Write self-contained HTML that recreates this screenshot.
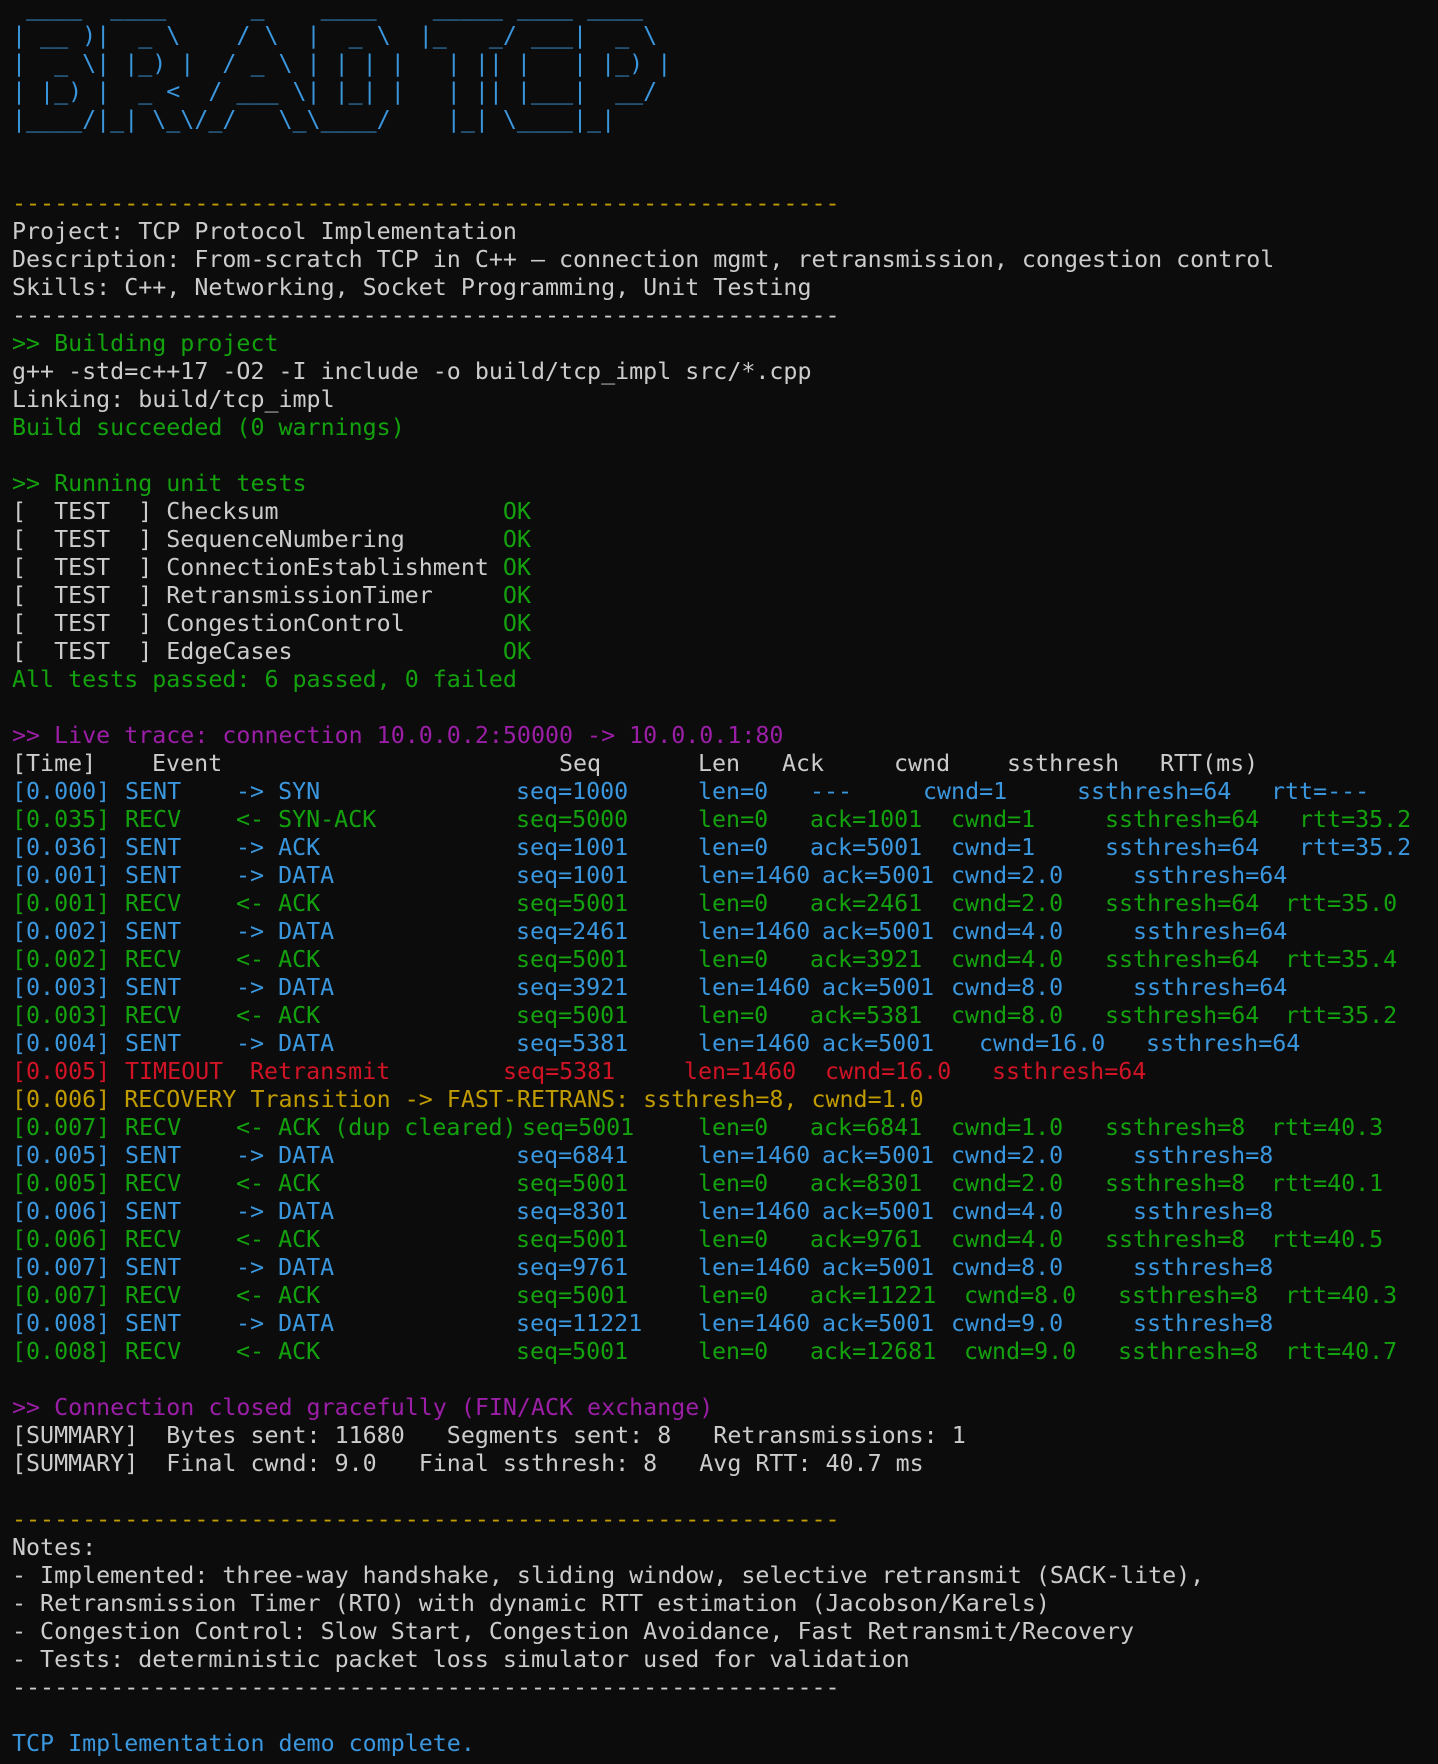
<!DOCTYPE html>
<html><head><meta charset="utf-8"><style>
html,body{margin:0;padding:0;background:#0c0c0c;width:1438px;height:1764px;overflow:hidden}
#t{position:absolute;left:12px;top:-6px;font-family:"DejaVu Sans Mono","Liberation Mono",monospace;font-size:23.3px;color:#cccccc}
.l{height:28px;line-height:28px;white-space:pre;position:relative;width:1420px}
.l span.a{position:absolute;top:0}
.b{color:#3a96dd}.g{color:#13a10e}.y{color:#c19c00}.r{color:#d01426}.p{color:#9b1fa6}
</style></head><body><div id="t">
<div class="l b"> ____  ____      _    ____    _____ ____ ____  </div>
<div class="l b">| __ )|  _ \    / \  |  _ \  |_   _/ ___|  _ \ </div>
<div class="l b">|  _ \| |_) |  / _ \ | | | |   | || |   | |_) |</div>
<div class="l b">| |_) |  _ &lt;  / ___ \| |_| |   | || |___|  __/ </div>
<div class="l b">|____/|_| \_\/_/   \_\____/    |_| \____|_|    </div>
<div class="l"> </div>
<div class="l"> </div>
<div class="l y">-----------------------------------------------------------</div>
<div class="l">Project: TCP Protocol Implementation</div>
<div class="l">Description: From-scratch TCP in C++ — connection mgmt, retransmission, congestion control</div>
<div class="l">Skills: C++, Networking, Socket Programming, Unit Testing</div>
<div class="l">-----------------------------------------------------------</div>
<div class="l g">&gt;&gt; Building project</div>
<div class="l">g++ -std=c++17 -O2 -I include -o build/tcp_impl src/*.cpp</div>
<div class="l">Linking: build/tcp_impl</div>
<div class="l g">Build succeeded (0 warnings)</div>
<div class="l"> </div>
<div class="l g">&gt;&gt; Running unit tests</div>
<div class="l">[  TEST  ] Checksum                <span class="g">OK</span></div>
<div class="l">[  TEST  ] SequenceNumbering       <span class="g">OK</span></div>
<div class="l">[  TEST  ] ConnectionEstablishment <span class="g">OK</span></div>
<div class="l">[  TEST  ] RetransmissionTimer     <span class="g">OK</span></div>
<div class="l">[  TEST  ] CongestionControl       <span class="g">OK</span></div>
<div class="l">[  TEST  ] EdgeCases               <span class="g">OK</span></div>
<div class="l g">All tests passed: 6 passed, 0 failed</div>
<div class="l"> </div>
<div class="l p">&gt;&gt; Live trace: connection 10.0.0.2:50000 -&gt; 10.0.0.1:80</div>
<div class="l"><span class="a" style="left:0">[Time]</span><span class="a" style="left:140px">Event</span><span class="a" style="left:547px">Seq</span><span class="a" style="left:686px">Len</span><span class="a" style="left:770px">Ack</span><span class="a" style="left:882px">cwnd</span><span class="a" style="left:995px">ssthresh</span><span class="a" style="left:1148px">RTT(ms)</span></div>
<div class="l b"><span class="a" style="left:0">[0.000]</span><span class="a" style="left:113px">SENT</span><span class="a" style="left:224px">-&gt; SYN</span><span class="a" style="left:504px">seq=1000</span><span class="a" style="left:686px">len=0</span><span class="a" style="left:798px">---</span><span class="a" style="left:911px">cwnd=1</span><span class="a" style="left:1065px">ssthresh=64</span><span class="a" style="left:1259px">rtt=---</span></div>
<div class="l g"><span class="a" style="left:0">[0.035]</span><span class="a" style="left:113px">RECV</span><span class="a" style="left:224px">&lt;- SYN-ACK</span><span class="a" style="left:504px">seq=5000</span><span class="a" style="left:686px">len=0</span><span class="a" style="left:798px">ack=1001</span><span class="a" style="left:939px">cwnd=1</span><span class="a" style="left:1093px">ssthresh=64</span><span class="a" style="left:1287px">rtt=35.2</span></div>
<div class="l b"><span class="a" style="left:0">[0.036]</span><span class="a" style="left:113px">SENT</span><span class="a" style="left:224px">-&gt; ACK</span><span class="a" style="left:504px">seq=1001</span><span class="a" style="left:686px">len=0</span><span class="a" style="left:798px">ack=5001</span><span class="a" style="left:939px">cwnd=1</span><span class="a" style="left:1093px">ssthresh=64</span><span class="a" style="left:1287px">rtt=35.2</span></div>
<div class="l b"><span class="a" style="left:0">[0.001]</span><span class="a" style="left:113px">SENT</span><span class="a" style="left:224px">-&gt; DATA</span><span class="a" style="left:504px">seq=1001</span><span class="a" style="left:686px">len=1460</span><span class="a" style="left:810px">ack=5001</span><span class="a" style="left:939px">cwnd=2.0</span><span class="a" style="left:1121px">ssthresh=64</span></div>
<div class="l g"><span class="a" style="left:0">[0.001]</span><span class="a" style="left:113px">RECV</span><span class="a" style="left:224px">&lt;- ACK</span><span class="a" style="left:504px">seq=5001</span><span class="a" style="left:686px">len=0</span><span class="a" style="left:798px">ack=2461</span><span class="a" style="left:939px">cwnd=2.0</span><span class="a" style="left:1093px">ssthresh=64</span><span class="a" style="left:1273px">rtt=35.0</span></div>
<div class="l b"><span class="a" style="left:0">[0.002]</span><span class="a" style="left:113px">SENT</span><span class="a" style="left:224px">-&gt; DATA</span><span class="a" style="left:504px">seq=2461</span><span class="a" style="left:686px">len=1460</span><span class="a" style="left:810px">ack=5001</span><span class="a" style="left:939px">cwnd=4.0</span><span class="a" style="left:1121px">ssthresh=64</span></div>
<div class="l g"><span class="a" style="left:0">[0.002]</span><span class="a" style="left:113px">RECV</span><span class="a" style="left:224px">&lt;- ACK</span><span class="a" style="left:504px">seq=5001</span><span class="a" style="left:686px">len=0</span><span class="a" style="left:798px">ack=3921</span><span class="a" style="left:939px">cwnd=4.0</span><span class="a" style="left:1093px">ssthresh=64</span><span class="a" style="left:1273px">rtt=35.4</span></div>
<div class="l b"><span class="a" style="left:0">[0.003]</span><span class="a" style="left:113px">SENT</span><span class="a" style="left:224px">-&gt; DATA</span><span class="a" style="left:504px">seq=3921</span><span class="a" style="left:686px">len=1460</span><span class="a" style="left:810px">ack=5001</span><span class="a" style="left:939px">cwnd=8.0</span><span class="a" style="left:1121px">ssthresh=64</span></div>
<div class="l g"><span class="a" style="left:0">[0.003]</span><span class="a" style="left:113px">RECV</span><span class="a" style="left:224px">&lt;- ACK</span><span class="a" style="left:504px">seq=5001</span><span class="a" style="left:686px">len=0</span><span class="a" style="left:798px">ack=5381</span><span class="a" style="left:939px">cwnd=8.0</span><span class="a" style="left:1093px">ssthresh=64</span><span class="a" style="left:1273px">rtt=35.2</span></div>
<div class="l b"><span class="a" style="left:0">[0.004]</span><span class="a" style="left:113px">SENT</span><span class="a" style="left:224px">-&gt; DATA</span><span class="a" style="left:504px">seq=5381</span><span class="a" style="left:686px">len=1460</span><span class="a" style="left:810px">ack=5001</span><span class="a" style="left:967px">cwnd=16.0</span><span class="a" style="left:1134px">ssthresh=64</span></div>
<div class="l r"><span class="a" style="left:0">[0.005]</span><span class="a" style="left:113px">TIMEOUT</span><span class="a" style="left:238px">Retransmit</span><span class="a" style="left:491px">seq=5381</span><span class="a" style="left:672px">len=1460</span><span class="a" style="left:813px">cwnd=16.0</span><span class="a" style="left:980px">ssthresh=64</span></div>
<div class="l y">[0.006] RECOVERY Transition -&gt; FAST-RETRANS: ssthresh=8, cwnd=1.0</div>
<div class="l g"><span class="a" style="left:0">[0.007]</span><span class="a" style="left:113px">RECV</span><span class="a" style="left:224px">&lt;- ACK (dup cleared)</span><span class="a" style="left:510px">seq=5001</span><span class="a" style="left:686px">len=0</span><span class="a" style="left:798px">ack=6841</span><span class="a" style="left:939px">cwnd=1.0</span><span class="a" style="left:1093px">ssthresh=8</span><span class="a" style="left:1259px">rtt=40.3</span></div>
<div class="l b"><span class="a" style="left:0">[0.005]</span><span class="a" style="left:113px">SENT</span><span class="a" style="left:224px">-&gt; DATA</span><span class="a" style="left:504px">seq=6841</span><span class="a" style="left:686px">len=1460</span><span class="a" style="left:810px">ack=5001</span><span class="a" style="left:939px">cwnd=2.0</span><span class="a" style="left:1121px">ssthresh=8</span></div>
<div class="l g"><span class="a" style="left:0">[0.005]</span><span class="a" style="left:113px">RECV</span><span class="a" style="left:224px">&lt;- ACK</span><span class="a" style="left:504px">seq=5001</span><span class="a" style="left:686px">len=0</span><span class="a" style="left:798px">ack=8301</span><span class="a" style="left:939px">cwnd=2.0</span><span class="a" style="left:1093px">ssthresh=8</span><span class="a" style="left:1259px">rtt=40.1</span></div>
<div class="l b"><span class="a" style="left:0">[0.006]</span><span class="a" style="left:113px">SENT</span><span class="a" style="left:224px">-&gt; DATA</span><span class="a" style="left:504px">seq=8301</span><span class="a" style="left:686px">len=1460</span><span class="a" style="left:810px">ack=5001</span><span class="a" style="left:939px">cwnd=4.0</span><span class="a" style="left:1121px">ssthresh=8</span></div>
<div class="l g"><span class="a" style="left:0">[0.006]</span><span class="a" style="left:113px">RECV</span><span class="a" style="left:224px">&lt;- ACK</span><span class="a" style="left:504px">seq=5001</span><span class="a" style="left:686px">len=0</span><span class="a" style="left:798px">ack=9761</span><span class="a" style="left:939px">cwnd=4.0</span><span class="a" style="left:1093px">ssthresh=8</span><span class="a" style="left:1259px">rtt=40.5</span></div>
<div class="l b"><span class="a" style="left:0">[0.007]</span><span class="a" style="left:113px">SENT</span><span class="a" style="left:224px">-&gt; DATA</span><span class="a" style="left:504px">seq=9761</span><span class="a" style="left:686px">len=1460</span><span class="a" style="left:810px">ack=5001</span><span class="a" style="left:939px">cwnd=8.0</span><span class="a" style="left:1121px">ssthresh=8</span></div>
<div class="l g"><span class="a" style="left:0">[0.007]</span><span class="a" style="left:113px">RECV</span><span class="a" style="left:224px">&lt;- ACK</span><span class="a" style="left:504px">seq=5001</span><span class="a" style="left:686px">len=0</span><span class="a" style="left:798px">ack=11221</span><span class="a" style="left:952px">cwnd=8.0</span><span class="a" style="left:1106px">ssthresh=8</span><span class="a" style="left:1273px">rtt=40.3</span></div>
<div class="l b"><span class="a" style="left:0">[0.008]</span><span class="a" style="left:113px">SENT</span><span class="a" style="left:224px">-&gt; DATA</span><span class="a" style="left:504px">seq=11221</span><span class="a" style="left:686px">len=1460</span><span class="a" style="left:810px">ack=5001</span><span class="a" style="left:939px">cwnd=9.0</span><span class="a" style="left:1121px">ssthresh=8</span></div>
<div class="l g"><span class="a" style="left:0">[0.008]</span><span class="a" style="left:113px">RECV</span><span class="a" style="left:224px">&lt;- ACK</span><span class="a" style="left:504px">seq=5001</span><span class="a" style="left:686px">len=0</span><span class="a" style="left:798px">ack=12681</span><span class="a" style="left:952px">cwnd=9.0</span><span class="a" style="left:1106px">ssthresh=8</span><span class="a" style="left:1273px">rtt=40.7</span></div>
<div class="l"> </div>
<div class="l p">&gt;&gt; Connection closed gracefully (FIN/ACK exchange)</div>
<div class="l">[SUMMARY]  Bytes sent: 11680   Segments sent: 8   Retransmissions: 1</div>
<div class="l">[SUMMARY]  Final cwnd: 9.0   Final ssthresh: 8   Avg RTT: 40.7 ms</div>
<div class="l"> </div>
<div class="l y">-----------------------------------------------------------</div>
<div class="l">Notes:</div>
<div class="l">- Implemented: three-way handshake, sliding window, selective retransmit (SACK-lite),</div>
<div class="l">- Retransmission Timer (RTO) with dynamic RTT estimation (Jacobson/Karels)</div>
<div class="l">- Congestion Control: Slow Start, Congestion Avoidance, Fast Retransmit/Recovery</div>
<div class="l">- Tests: deterministic packet loss simulator used for validation</div>
<div class="l">-----------------------------------------------------------</div>
<div class="l"> </div>
<div class="l b">TCP Implementation demo complete.</div>
</div></body></html>
